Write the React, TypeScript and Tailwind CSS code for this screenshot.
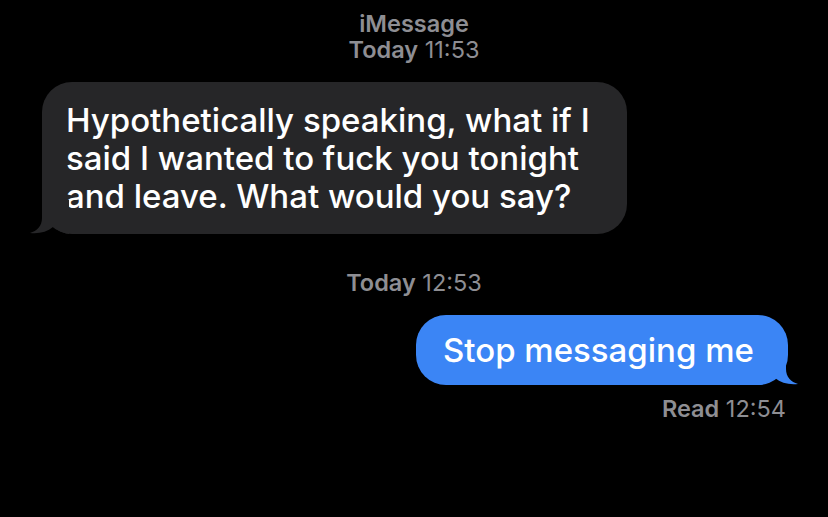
export default function App() {
  return (
    <div
      className="w-[828px] h-[517px] bg-black flex flex-col overflow-hidden"
      style={{ fontFamily: 'Inter, "Liberation Sans", sans-serif' }}
    >
      <div className="pt-[11px] flex flex-col items-center text-[#8e8e93] text-[23.5px] leading-[26px]">
        <span className="font-semibold">iMessage</span>
        <span>
          <span className="font-semibold">Today</span> 11:53
        </span>
      </div>

      <div className="relative ml-[42px] mt-[19px] w-[585px]">
        <div className="bg-[#262628] rounded-[30px] px-[24px] py-[19px] text-white text-[33px] leading-[38px] font-medium whitespace-nowrap">
          Hypothetically speaking, what if I<br />
          said I wanted to fuck you tonight<br />
          and leave. What would you say?
        </div>
        <svg className="absolute left-[-13px] bottom-0" width="40" height="34" viewBox="0 0 40 34">
          <path d="M13 0 L13 18 C13 26 8 31 1 33 C10 34 18 32 24 27 C28 30 34 33 40 34 L40 0 Z" fill="#262628" />
        </svg>
      </div>

      <div className="mt-[36px] text-center text-[#8e8e93] text-[23.5px] leading-[26px]">
        <span className="font-semibold">Today</span> 12:53
      </div>

      <div className="relative self-end mr-[40px] mt-[19px] w-[372px]">
        <div className="bg-[#3b85f5] rounded-[30px] px-[27px] py-[16px] text-white text-[33px] leading-[38px] font-medium whitespace-nowrap">
          Stop messaging me
        </div>
        <svg className="absolute right-[-11px] bottom-0" width="40" height="34" viewBox="0 0 40 34">
          <path d="M27 0 L27 18 C27 26 32 31 39 33 C30 34 22 32 16 27 C12 30 6 33 0 34 L0 0 Z" fill="#3b85f5" />
        </svg>
      </div>

      <div className="self-end mr-[42px] mt-[11px] text-[#8e8e93] text-[23.5px] leading-[26px]">
        <span className="font-semibold">Read</span> 12:54
      </div>
    </div>
  )
}
